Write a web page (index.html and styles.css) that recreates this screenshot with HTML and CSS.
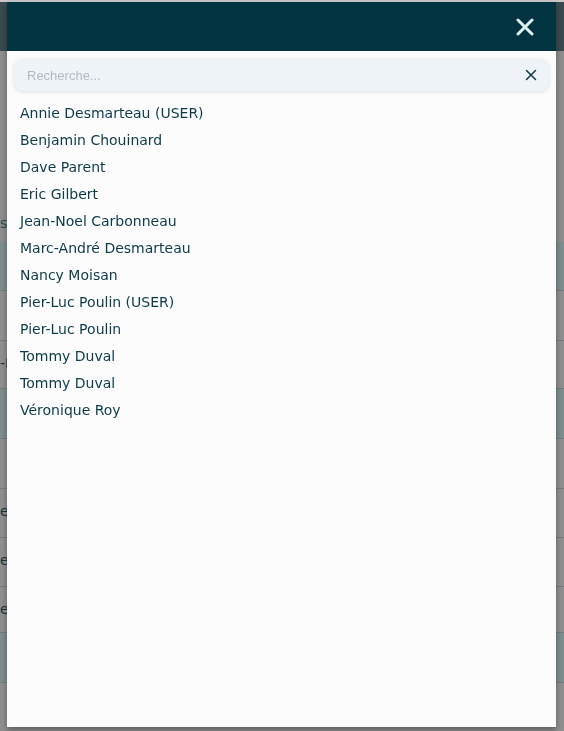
FILE: index.html
```html
<!DOCTYPE html>
<html lang="fr">
<head>
<meta charset="utf-8">
<title>Sélection</title>
<link rel="stylesheet" href="styles.css">
</head>
<body>
<div class="page">
  <div class="page-top"></div>
  <div class="page-head"></div>
  <div class="page-gap"><span class="frag frag-title">sa</span></div>
  <div class="row row-teal h49"></div>
  <div class="row h50"></div>
  <div class="row h48"><span class="frag">-L</span></div>
  <div class="row row-teal h50"></div>
  <div class="row h50"></div>
  <div class="row h49"><span class="frag">e</span></div>
  <div class="row h49"><span class="frag">e</span></div>
  <div class="row h46"><span class="frag">e</span></div>
  <div class="row row-teal h50"></div>
  <div class="row h50"></div>
</div>

<div class="modal">
  <div class="modal-head">
    <button class="close" aria-label="Fermer">
      <svg width="18" height="18" viewBox="0 0 18 18"><path d="M2 2L16 16M16 2L2 16" stroke="#dff0f1" stroke-width="3" stroke-linecap="round"/></svg>
    </button>
  </div>
  <div class="modal-body">
    <div class="search">
      <input class="search-input" type="text" placeholder="Recherche...">
      <svg class="clear" width="12" height="12" viewBox="0 0 12 12"><path d="M1.5 1.5L10.5 10.5M10.5 1.5L1.5 10.5" stroke="#0d3a48" stroke-width="1.5" stroke-linecap="round"/></svg>
    </div>
    <ul class="list">
      <li>Annie Desmarteau (USER)</li>
      <li>Benjamin Chouinard</li>
      <li>Dave Parent</li>
      <li>Eric Gilbert</li>
      <li>Jean-Noel Carbonneau</li>
      <li>Marc-André Desmarteau</li>
      <li>Nancy Moisan</li>
      <li>Pier-Luc Poulin (USER)</li>
      <li>Pier-Luc Poulin</li>
      <li>Tommy Duval</li>
      <li>Tommy Duval</li>
      <li>Véronique Roy</li>
    </ul>
  </div>
</div>
</body>
</html>
```

FILE: styles.css
```css
html, body {
  margin: 0;
  padding: 0;
  height: 100%;
  overflow: hidden;
}
body {
  background: #8d8d8d;
  font-family: "DejaVu Sans", Verdana, sans-serif;
}
.page {
  display: flex;
  flex-direction: column;
}
.page-top {
  height: 2px;
  background: #c9c9c9;
}
.page-head {
  height: 49px;
  background: #3a4a4f;
}
.page-gap {
  height: 191px;
  position: relative;
  background: #8e8e8e;
}
.row {
  box-sizing: border-box;
  border-bottom: 1px solid #757b7c;
  background: #8f8f8f;
  position: relative;
}
.h46 { height: 46px; }
.h48 { height: 48px; }
.h49 { height: 49px; }
.h50 { height: 50px; }
.row-teal {
  background: #7e8d8e;
}
.frag {
  position: absolute;
  left: 0;
  top: 14px;
  font-size: 14px;
  color: #16353e;
}
.frag-title {
  top: auto;
  bottom: 11px;
  color: #2a4a55;
}

.modal {
  position: fixed;
  left: 7px;
  top: 2px;
  width: 549px;
  height: 725px;
  background: #fcfcfc;
  box-shadow: 0 3px 6px rgba(0, 0, 0, 0.35);
  display: flex;
  flex-direction: column;
}
.modal-head {
  height: 49px;
  background: #023340;
  display: flex;
  align-items: center;
  justify-content: flex-end;
  padding-right: 22px;
}
.close {
  border: 0;
  background: transparent;
  padding: 0;
  width: 18px;
  height: 18px;
  display: flex;
  cursor: pointer;
}
.modal-body {
  padding: 8px 7px 0;
}
.search {
  height: 32px;
  border-radius: 9px;
  background: #eef3f7;
  box-shadow: 0 1px 4px rgba(0, 0, 0, 0.12);
  display: flex;
  align-items: center;
  padding: 0 12px 0 13px;
}
.search-input {
  flex: 1;
  border: 0;
  background: transparent;
  outline: none;
  padding: 0;
  font-family: "Liberation Sans", Arial, sans-serif;
  font-size: 13px;
  color: #333;
}
.search-input::placeholder {
  color: #b3bac1;
}
.clear {
  flex: none;
}
.list {
  list-style: none;
  margin: 0;
  padding: 9px 0 0 6px;
}
.list li {
  font-size: 14px;
  line-height: 27px;
  color: #0d3a48;
}
```
